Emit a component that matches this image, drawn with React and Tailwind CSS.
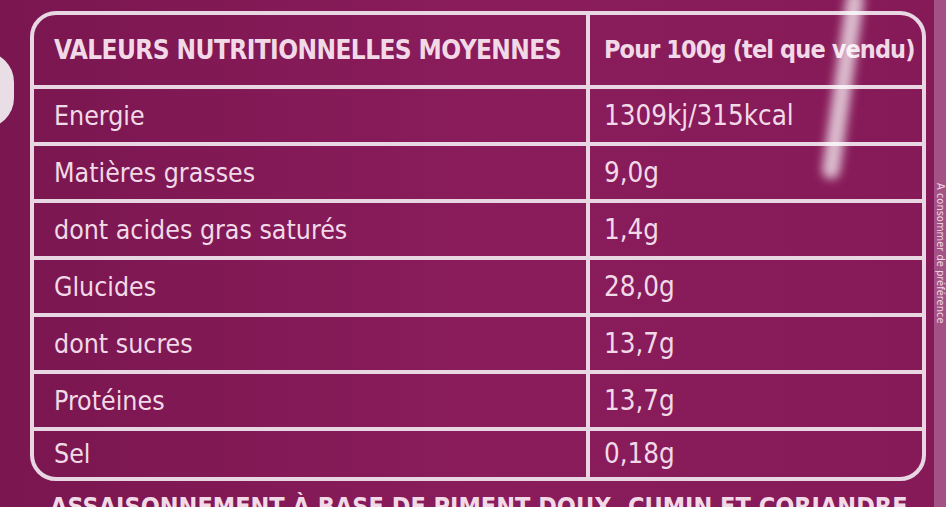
const rows = [
  ['Energie', '1309kj/315kcal'],
  ['Matières grasses', '9,0g'],
  ['dont acides gras saturés', '1,4g'],
  ['Glucides', '28,0g'],
  ['dont sucres', '13,7g'],
  ['Protéines', '13,7g'],
  ['Sel', '0,18g'],
];

const font = { fontFamily: '"DejaVu Sans Condensed", "Liberation Sans", sans-serif' };

export default function App() {
  return (
    <div
      className="relative w-[946px] h-[507px] overflow-hidden bg-gradient-to-r from-[#7a1650] via-[#8a1c5b] to-[#861a58] text-[#f1d9e7]"
      style={font}
    >
      {/* white disc peeking at left edge */}
      <div className="absolute left-[-46px] top-[52px] w-[60px] h-[76px] rounded-full bg-[#e9dde6]" />

      {/* right side strip */}
      <div className="absolute right-0 top-0 w-[12px] h-full bg-[#a45285] flex items-center justify-center">
        <span className="rotate-90 whitespace-nowrap text-[11px] text-[#f0d7e6]">A consommer de préférence</span>
      </div>

      <div className="pt-[11px] pl-[30px] pr-[20px]">
        <div className="w-[896px] border-[4px] border-[#e8d6e2] rounded-[26px] overflow-hidden">
          <div className="flex h-[74px] border-b-[4px] border-[#e8d6e2]">
            <div className="w-[556px] shrink-0 border-r-[4px] border-[#e8d6e2] pl-[20px] flex items-center text-[26px] font-bold tracking-[-0.6px] whitespace-nowrap">
              VALEURS NUTRITIONNELLES MOYENNES
            </div>
            <div className="flex-1 min-w-0 pl-[14px] flex items-center text-[25px] font-bold tracking-[-0.9px] whitespace-nowrap">
              Pour 100g (tel que vendu)
            </div>
          </div>
          {rows.map(([label, value], i) => (
            <div
              key={label}
              className={i < rows.length - 1 ? 'flex h-[57px] border-b-[4px] border-[#e8d6e2]' : 'flex h-[46px]'}
            >
              <div className="w-[556px] shrink-0 border-r-[4px] border-[#e8d6e2] pl-[20px] flex items-center text-[26.5px]">
                {label}
              </div>
              <div className="flex-1 pl-[14px] flex items-center text-[27.5px]">{value}</div>
            </div>
          ))}
        </div>
        <div className="mt-[7px] pl-[20px] text-[25px] font-bold whitespace-nowrap">
          ASSAISONNEMENT À BASE DE PIMENT DOUX, CUMIN ET CORIANDRE
        </div>
      </div>

      {/* light glare */}
      <div className="absolute left-[834px] top-[-10px] w-[18px] h-[190px] rotate-[8deg] bg-white/70 blur-[5px] rounded-full" />
    </div>
  );
}
